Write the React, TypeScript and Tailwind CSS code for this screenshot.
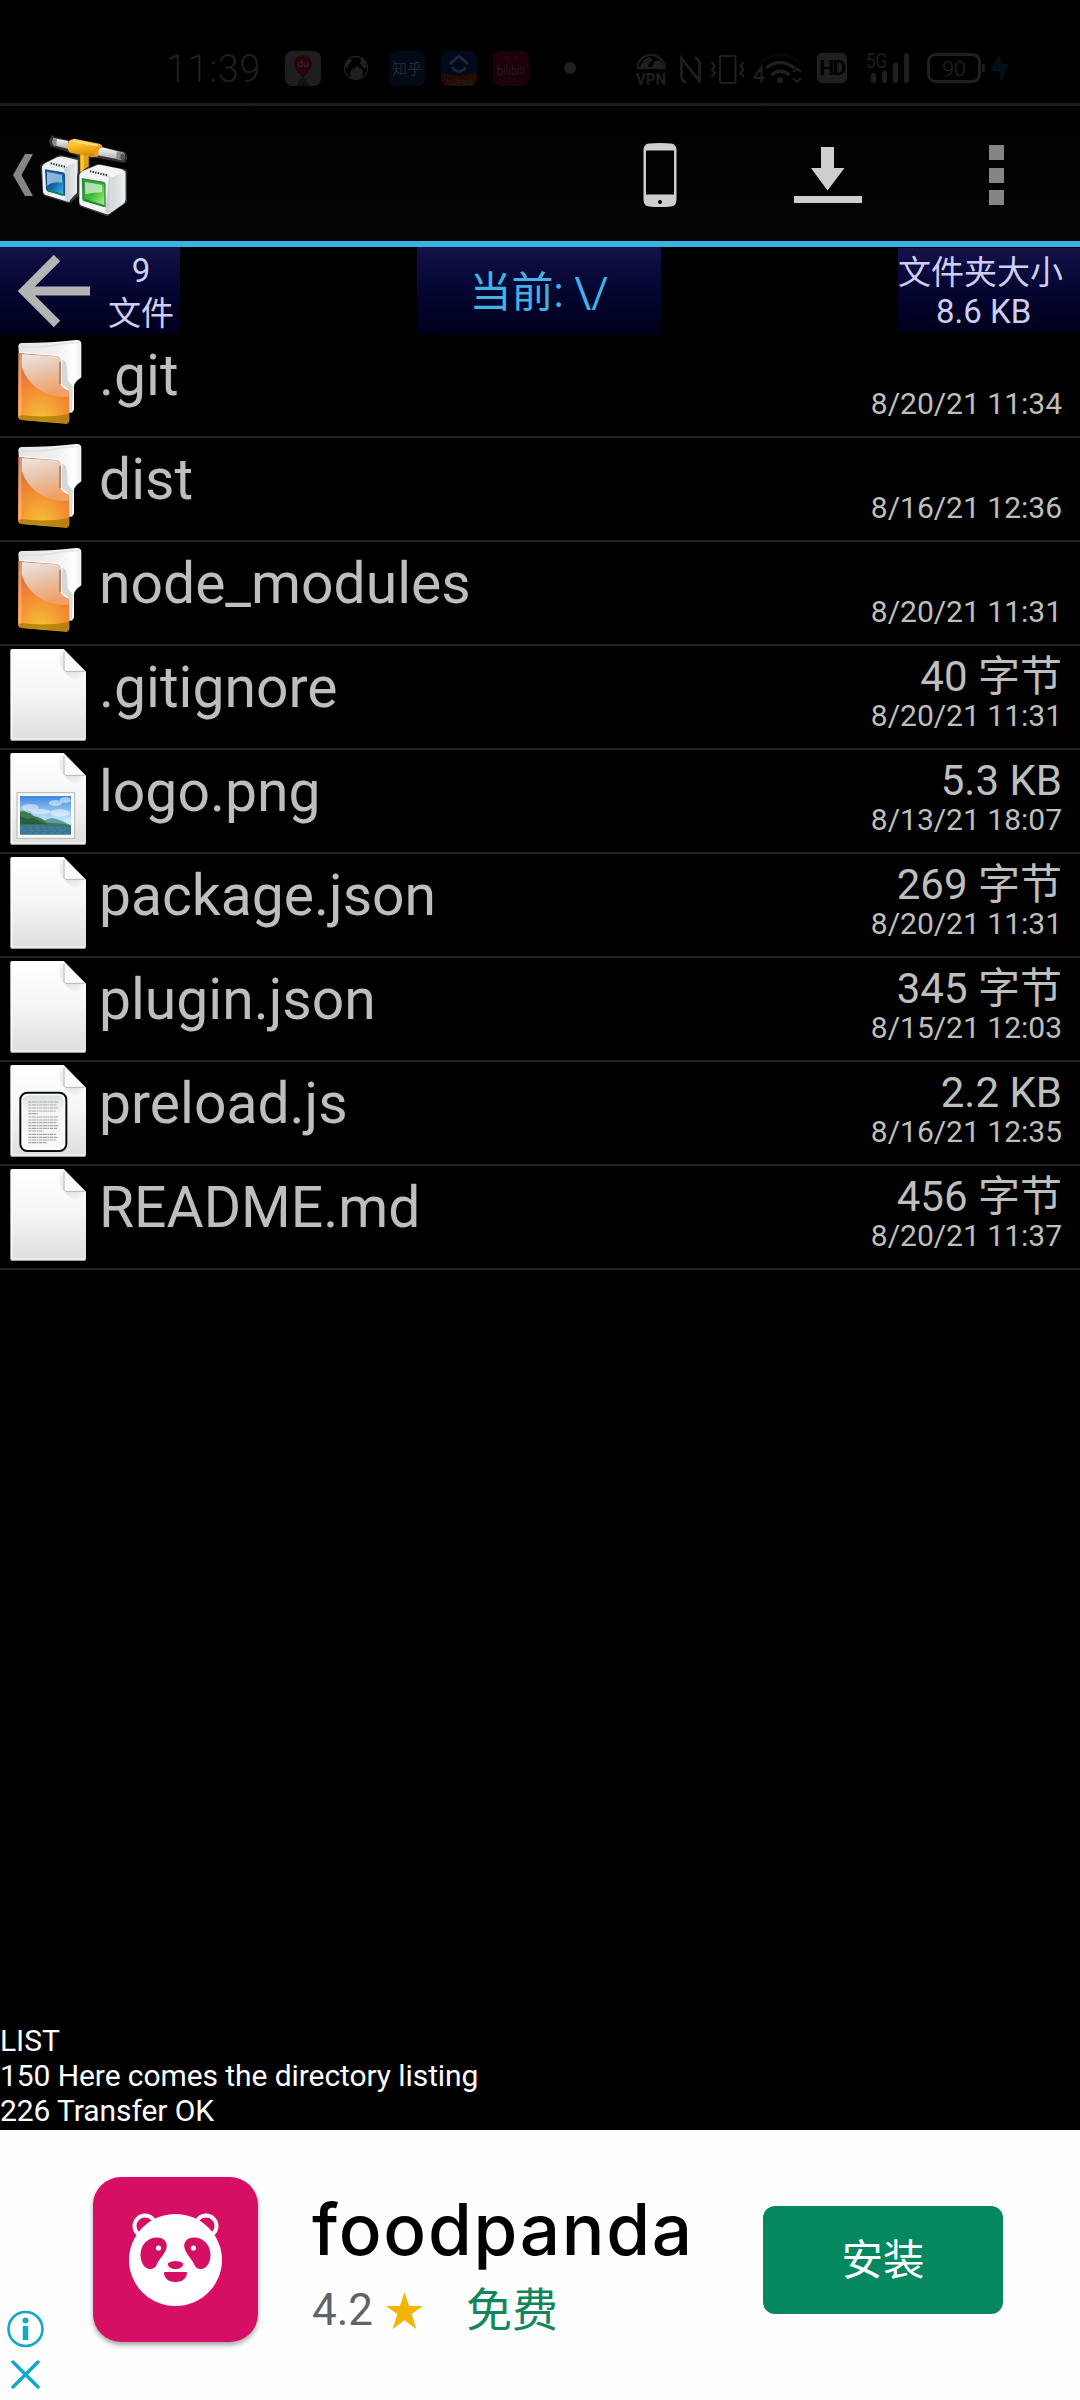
import React from "react";

type Kind = "folder" | "file" | "image" | "text";

const FILES: { name: string; kind: Kind; size?: string; date: string }[] = [
  { name: ".git", kind: "folder", date: "8/20/21 11:34" },
  { name: "dist", kind: "folder", date: "8/16/21 12:36" },
  { name: "node_modules", kind: "folder", date: "8/20/21 11:31" },
  { name: ".gitignore", kind: "file", size: "40 字节", date: "8/20/21 11:31" },
  { name: "logo.png", kind: "image", size: "5.3 KB", date: "8/13/21 18:07" },
  { name: "package.json", kind: "file", size: "269 字节", date: "8/20/21 11:31" },
  { name: "plugin.json", kind: "file", size: "345 字节", date: "8/15/21 12:03" },
  { name: "preload.js", kind: "text", size: "2.2 KB", date: "8/16/21 12:35" },
  { name: "README.md", kind: "file", size: "456 字节", date: "8/20/21 11:37" },
];

function StatusBar() {
  return (
    <div className="flex h-[103px] items-start pt-[51px] text-[#1f1f1f]">
      <div className="ml-[166px] h-[36px] w-[98px] whitespace-nowrap text-[38px] leading-[36px] font-light tracking-[0.5px]">11:39</div>
      {/* Map app */}
      <svg className="ml-[21px] h-[36px] w-[36px] overflow-visible" viewBox="0 0 36 36">
        <rect width="36" height="35" rx="7" fill="#1e1e1e" />
        <path d="M18 4a9 9 0 0 1 9 9c0 6-6 9-9 15-3-6-9-9-9-15a9 9 0 0 1 9-9z" fill="#260608" />
        <path d="M15 28h6l3 7H12z" fill="#0c1424" />
        <path d="M12 35l2-3h8l2 3z" fill="#200808" />
        <text x="18" y="16" textAnchor="middle" fontSize="9" fontFamily="Inter" fill="#303030">du</text>
      </svg>
      {/* Globe */}
      <svg className="ml-[22px] mt-[4px] h-[26px] w-[26px]" viewBox="0 0 26 26">
        <circle cx="13" cy="13" r="11.5" fill="none" stroke="#1f1f1f" strokeWidth="1.3" />
        <path d="M2 12q0-5 4-8l3 1-1 3-3 2v3zM18 3q5 2 6 8l-2 3-3-3-2-3zM8 24l-1-6 2-4 3-1 2-3 2 3 3 1 1 4-1 5q-6 3-11 1z" fill="#1f1f1f" />
      </svg>
      <svg className="ml-[20px] h-[36px] w-[36px] overflow-visible" viewBox="0 0 36 36">
        <rect width="36" height="35" rx="7" fill="#010a15" />
        <text x="18" y="23" textAnchor="middle" fontSize="15" fontFamily="Noto Sans CJK SC" fill="#23282d">知乎</text>
      </svg>
      <svg className="ml-[16px] h-[36px] w-[36px] overflow-visible" viewBox="0 0 36 36">
        <path d="M7 0h22a7 7 0 0 1 7 7v17H0V7a7 7 0 0 1 7-7z" fill="#03091c" />
        <path d="M0 21q18 7 36 0v7a7 7 0 0 1-7 7H7a7 7 0 0 1-7-7z" fill="#230b02" />
        <path d="M9 13l9-8 9 8M11 16q7 9 14 0" fill="none" stroke="#25282e" strokeWidth="2.6" />
        <text x="18" y="33" textAnchor="middle" fontSize="5.5" fontFamily="Noto Sans CJK SC" fill="#2b2321">为伍跨旅途</text>
      </svg>
      <svg className="ml-[16px] h-[36px] w-[36px] overflow-visible" viewBox="0 0 36 36">
        <rect width="36" height="35" rx="7" fill="#1d020b" />
        <path d="M12 5l3 3M24 5l-3 3" stroke="#290a14" strokeWidth="2" />
        <text x="18" y="24" textAnchor="middle" fontSize="13" fontFamily="Roboto" textLength="28" lengthAdjust="spacingAndGlyphs" fill="#2b151c">bilibili</text>
      </svg>
      <div className="ml-[35px] mt-[11px] h-[12px] w-[12px] rounded-full bg-[#1f1f1f]" />
      {/* VPN */}
      <svg className="ml-[59px] mt-[2px] h-[34px] w-[33px] overflow-visible" viewBox="0 0 33 34">
        <path d="M2.500 15a13.500 13 0 0 1 27 0z" fill="none" stroke="#1f1f1f" strokeWidth="2" />
        <path d="M5 13l4-6 5-3 4 3-4 3-1 4-5 2zM19 9l6-2 4 7h-7l-5 1z" fill="#1f1f1f" />
        <text x="16" y="31.500" textAnchor="middle" fontSize="17" fontWeight="700" fontFamily="Roboto" textLength="30" lengthAdjust="spacingAndGlyphs" fill="#1f1f1f">VPN</text>
      </svg>
      {/* NFC */}
      <svg className="ml-[12px] mt-[4px] h-[30px] w-[22px]" viewBox="0 0 22 30">
        <path d="M6 27.500q-4.500-2-4.500-6.500V3.500L19.500 26V9q0-4.500-4.500-6.500" fill="none" stroke="#1f1f1f" strokeWidth="2.800" />
      </svg>
      {/* Vibrate */}
      <svg className="ml-[8px] mt-[3px] h-[31px] w-[36px]" viewBox="0 0 36 31">
        <rect x="10" y="2" width="15.500" height="27" rx="1.500" fill="none" stroke="#1f1f1f" strokeWidth="2" />
        <path d="M1.500 8l3.500 4-3 3.500 3 3.500-3.500 4M34 8l-3.500 4 3 3.500-3 3.500 3.500 4" fill="none" stroke="#1f1f1f" strokeWidth="2" />
      </svg>
      {/* Wi-Fi */}
      <svg className="ml-[7px] mt-[1px] h-[34px] w-[50px]" viewBox="0 0 50 34">
        <path d="M9 9.500q18-14 37 0" fill="none" stroke="#080808" strokeWidth="3" />
        <path d="M13.500 16q13-11 28 0M18.500 23q9-7.500 18 0" fill="none" stroke="#1f1f1f" strokeWidth="3.400" />
        <circle cx="27" cy="28" r="3" fill="#1f1f1f" />
        <path d="M8.500 31V15L1 26h11M40 20l4-3.500 4 3.500M40 26l4 3.500 4-3.500" fill="none" stroke="#1f1f1f" strokeWidth="2.200" />
      </svg>
      <div className="ml-[14px] mt-[2px] flex h-[30px] w-[30px] items-center justify-center rounded-[5px] bg-[#1f1f1f] text-[21px] leading-[30px] font-bold tracking-[-1.5px] text-black">HD</div>
      {/* Cellular */}
      <svg className="ml-[19px] mt-[1px] h-[34px] w-[46px] overflow-visible" viewBox="0 0 46 34">
        <text x="0" y="16" fontSize="20" fontFamily="Roboto" textLength="21" lengthAdjust="spacingAndGlyphs" fill="#1f1f1f">5G</text>
        <path d="M7.500 23.500v5M18.500 21v7.500M29.500 13v15.500M40.500 3.500v25" stroke="#1f1f1f" strokeWidth="5" strokeLinecap="round" />
      </svg>
      {/* Battery */}
      <svg className="ml-[15px] mt-[1px] h-[34px] w-[84px] overflow-visible" viewBox="0 0 84 34">
        <rect x="1.500" y="2.500" width="51" height="27" rx="7" fill="none" stroke="#1f1f1f" strokeWidth="3" />
        <path d="M56.500 12v8" stroke="#1f1f1f" strokeWidth="2.500" />
        <text x="27" y="23.500" textAnchor="middle" fontSize="21" fontWeight="300" fontFamily="Roboto" fill="#262626">90</text>
        <path d="M73 1L63 19h9l2 12 8-19h-7z" fill="#011017" />
      </svg>
    </div>
  );
}

function AppLogo() {
  return (
    <svg className="ml-[5px] h-[84px] w-[92px]" viewBox="115 128 276 252">
      <defs>
        <linearGradient id="tube" x1="0" y1="0" x2="0.200" y2="1">
          <stop offset="0" stopColor="#ffcf4a" /><stop offset="0.400" stopColor="#fbc02c" /><stop offset="1" stopColor="#d98a00" />
        </linearGradient>
        <linearGradient id="pipe" x1="0" y1="0" x2="0" y2="1">
          <stop offset="0" stopColor="#fff" /><stop offset="1" stopColor="#a8a8a8" />
        </linearGradient>
        <linearGradient id="blueScreen" x1="0" y1="0" x2="1" y2="1">
          <stop offset="0" stopColor="#2f6fb4" /><stop offset="0.500" stopColor="#0f62ab" /><stop offset="1" stopColor="#39b8e4" />
        </linearGradient>
        <linearGradient id="greenScreen" x1="0" y1="0" x2="1" y2="1">
          <stop offset="0" stopColor="#3f9e4c" /><stop offset="0.500" stopColor="#3dbd35" /><stop offset="1" stopColor="#b0f088" />
        </linearGradient>
        <linearGradient id="side" x1="0" y1="0" x2="1" y2="0">
          <stop offset="0" stopColor="#c8cdd0" /><stop offset="1" stopColor="#eceff0" />
        </linearGradient>
      </defs>
      <g stroke="#343434" strokeWidth="12" strokeLinejoin="round" fill="#343434">
        <path d="M160 145l210 44q12 10 3 22l-75-13-34-3v45l-26 4v-52l-36-14-44-15q-8-10 2-21z" />
        <path d="M128 228l52-28 52 9v104l-24 20-72-22zM242 252l52-25 82 16v90l-54 38-78-28z" />
      </g>
      <path d="M162 144l44 8 2 24-46-11q-7-10 0-21z" fill="url(#pipe)" />
      <path d="M162 144l10 2-2 21-8-2q-7-10 0-21z" fill="#8c8c8c" />
      <path d="M296 168l76 19q7 12-2 23l-76-15z" fill="url(#pipe)" />
      <path d="M352 183l20 4q7 12-2 23l-21-4z" fill="#8d8d8d" /><ellipse cx="369" cy="200" rx="7" ry="10" fill="#555" />
      <path d="M241 185h26v43l-26 18z" fill="#e3a316" /><path d="M244 190h8v48l-8 6z" fill="#ffc83f" />
      <path d="M219 147q6-3 12 0l68 13q11 3 8 12l-11 2-4 25-15 2-56-12q-20-1-16-25 2-16 14-17z" fill="url(#tube)" />
      <path d="M298 163q12 1 9 9-12 0-11 17l-1 10q-14-2-12-18 2-14 15-18z" fill="#f59a10" />
      <path d="M221 152l74 14" stroke="#ffe390" strokeWidth="5" />
      <path d="M127 229q3-8 12-12l35-17q8-3 18-1l42 10v37q-3 7-3 60l-22 26q-4 2-9 1l-61-19q-9-3-9-12z" fill="#eff2f3" />
      <path d="M194 232l38-18v94l-29 26q-9-2-6-14z" fill="url(#side)" /><path d="M192 236q15-4 16 10v88" fill="none" stroke="#d2d7d9" strokeWidth="5" />
      <path d="M136 237l54 9q6 2 6 8v63l-50-13q-6-2-7-8z" fill="#174c8a" />
      <path d="M141 242l50 9v61l-42-12q-6-1-6-8z" fill="url(#blueScreen)" />
      <path d="M142 245l45 8v24q-25-4-45 9z" fill="#fff" fillOpacity="0.500" /><path d="M144 298l46 17" stroke="#178745" strokeWidth="5" />
      <path d="M239 254q2-8 10-12l38-16q8-4 18-2l59 12q13 3 13 15v78q0 8-7 12l-41 29q-4 3-10 1l-71-24q-9-3-9-12z" fill="#f2f4f5" />
      <path d="M327 265l50-23v87q0 7-7 12l-49 30q-5-2-4-10z" fill="url(#side)" /><path d="M313 255q21 1 21 20v89" fill="none" stroke="#d9dddf" strokeWidth="6" />
      <path d="M246 263l66 11q6 2 6 8v69l-65-18q-5-2-5-7z" fill="#308d38" />
      <path d="M253 270l57 10q4 1 4 6v58l-59-16z" fill="url(#greenScreen)" />
      <path d="M256 275l51 9v22q-27 0-50 6z" fill="#fff" fillOpacity="0.600" /><path d="M255 328l58 20" stroke="#128b20" strokeWidth="5" />
      <path d="M153 219l47 11M271 243l53 12" stroke="#222" strokeWidth="6" strokeDasharray="4 4" />
    </svg>
  );
}

function ActionBar() {
  return (
    <div className="flex h-[144px] items-center border-t-[3px] border-b-[6px] border-t-[#1c1c1c] border-b-[#3cb1e3] bg-linear-to-b from-[#010101] to-[#040505]">
      <svg className="ml-[13px] mt-[2px] h-[42px] w-[20px]" viewBox="0 0 20 42">
        <path d="M12 0h8L8.500 21 20 42h-8L0 21z" fill="#858585" />
      </svg>
      <div className="flex h-full w-[105px] items-center pt-[2px]"><AppLogo /></div>
      <svg className="ml-[505px] mt-[3px] h-[64px] w-[34px]" viewBox="0 0 34 64">
        <path fillRule="evenodd" d="M6 .5Q17-.5 28 .5q5 .5 5.500 6V57q-.5 6-5.500 6.500-11 1-22 0Q1 63 .5 57V6.500Q1 1 6 .5zM3 7.500v44h28v-44zM17 57a2 2 0 1 0 0 4 2 2 0 0 0 0-4z" fill="#cecece" />
      </svg>
      <svg className="ml-[117px] mt-[3px] h-[56px] w-[68px]" viewBox="0 0 68 56">
        <path d="M27 0h13v21h10.500L33.500 43.500 17 21h10zM0 49h68v7H0z" fill="#cecece" />
      </svg>
      <div className="ml-[127px] mt-[3px] flex h-[60px] w-[15px] flex-col justify-between">
        <div className="h-[15px] bg-[#858585]" />
        <div className="h-[15px] bg-[#858585]" />
        <div className="h-[15px] bg-[#858585]" />
      </div>
    </div>
  );
}

function PathBar() {
  return (
    <div className="flex h-[87px] items-start text-[33px] text-[#cfcdf2]">
      <div className="flex h-[87px] w-[180px] bg-linear-to-b from-[#121248] to-[#00001c]">
        <svg className="ml-[18px] mt-[8px] h-[72px] w-[72px]" viewBox="0 0 72 72">
          <path d="M72 36H12M39 3L6 36l33 33" fill="none" stroke="#b4b4b4" strokeWidth="9" />
        </svg>
        <div className="ml-[18px] flex w-[66px] flex-col items-center pt-[2px] leading-[43px]">
          <span>9</span>
          <span>文件</span>
        </div>
      </div>
      <div className="ml-[237px] h-[87px] w-[244px] bg-linear-to-b from-[#121248] to-[#00001c] text-center text-[42px] leading-[92px] text-[#43b2e2]">
        当前: \/
      </div>
      <div className="mt-[1px] ml-auto flex h-[84px] w-[182px] flex-col bg-linear-to-b from-[#121248] to-[#00001c] leading-[42px]">
        <span className="h-[43px] leading-[50px]">文件夹大小</span>
        <span className="ml-[38px] whitespace-nowrap">8.6 KB</span>
      </div>
    </div>
  );
}

function FolderIcon() {
  return (
    <svg className="ml-[16px] mt-[4px] h-[88px] w-[68px]" viewBox="51 24 204 264">
      <path d="M58 48q1-8 10-9 90 0 164-9 15-1 15 12v100q-22 16-22 26v70q-3 12-14 10L60 80z" fill="url(#paper)" />
      <path d="M64 50q70 4 135-10l42-3" fill="none" stroke="#d5d5d5" strokeWidth="5" opacity=".6" />
      <path d="M190 90q16-4 16 60l16 20-3 70-12 5-20-80z" fill="#bbb" opacity=".55" />
      <path d="M58 68l112 8q17 2 17 16v70q2 6 22 18l2 90q-1 12-11 11L68 270q-11-2-11-12z" fill="url(#orange)" />
      <path d="M68 72l103 7q14 1 14 14v70q2 6 22 18v20Q100 200 68 110z" fill="url(#gloss)" />
      <path d="M60 254q85 12 151-3v18q-1 12-11 11L68 270q-8-2-8-16z" fill="#a77a00" opacity=".75" />
      <path d="M60 67l111 9q16 1 16 16v70q3 8 22 18" fill="none" stroke="#fff" strokeWidth="4" />
      <path d="M63 72v186" stroke="#fff" strokeWidth="9" opacity=".28" />
      <path d="M183 95v67" stroke="#8f4b35" strokeWidth="5" opacity=".6" />
    </svg>
  );
}

function DocumentIcon({ kind }: { kind: Kind }) {
  return (
    <svg className="ml-[9px] mt-[2px] h-[94px] w-[79px]" viewBox="27 24 237 282">
      <path d="M36 27h155l67 68v201q0 6-6 6H37q-6 0-6-6V32q0-5 5-5z" fill="url(#doc)" />
      <path d="M190 30v65h68v30q-60 0-80-55-6-25 12-40z" fill="url(#fold)" />
      <path d="M192 31l64 64h-58q-6 0-6-6z" fill="#fbfbfb" />
      <path d="M192 35v54q0 5 6 5h56" fill="none" stroke="#b5b5b5" strokeWidth="3" />
      <path d="M192 29l66 67" stroke="#c4c4c4" strokeWidth="2" />
      <path d="M35 32v265h219" fill="none" stroke="#fff" strokeWidth="3" />
      <path d="M33 301h224" stroke="#999" strokeWidth="2" />
      {kind === "image" && (
        <g>
          <rect x="51" y="146" width="173" height="137" fill="#f8f9fa" stroke="#b6b6b6" strokeWidth="3" />
          <rect x="60" y="156" width="153" height="116" fill="url(#sky)" />
          <g fill="#fff" opacity=".5">
            <ellipse cx="90" cy="191" rx="26" ry="11" /><ellipse cx="122" cy="203" rx="30" ry="8" /><ellipse cx="166" cy="177" rx="20" ry="9" /><ellipse cx="196" cy="168" rx="17" ry="9" /><ellipse cx="180" cy="207" rx="30" ry="11" />
          </g>
          <path d="M118 240q30-24 48-16 26 6 47 22H118z" fill="#5e9bab" />
          <path d="M60 203q10-5 20 2 12 1 21 11 24 4 40 20 30 0 72 7v6H60z" fill="#3d7b4c" />
          <path d="M60 215l22 10 20-4 18 12 24 8H60z" fill="#2a5f3c" />
          <path d="M60 243l153 4v25H60z" fill="#3b7593" />
          <path d="M60 252h153M66 260h130M60 267h153" stroke="#5a92b0" strokeWidth="1.500" strokeDasharray="14 8" />
        </g>
      )}
      {kind === "text" && (
        <g>
          <rect x="61" y="110" width="138" height="175" rx="21" fill="#fff" stroke="#0b0d0f" strokeWidth="6" />
          <rect x="69" y="118" width="122" height="159" rx="14" fill="url(#page)" />
          <g stroke="#a3a6a8" strokeWidth="3.500" strokeDasharray="9 1.500 13 1.500 6 1.500">
            <path d="M85 138h90M85 147h84M85 156h91M85 165h82M85 173h28M85 183h90M85 192h87M85 200h84M85 209h91M85 217h86M85 225h46M85 235h82M85 244h86M85 252h84M85 260h54" />
          </g>
        </g>
      )}
    </svg>
  );
}

function IconDefs() {
  return (
    <svg className="absolute h-0 w-0" aria-hidden="true">
      <defs>
        <linearGradient id="paper" x1="0" y1="0" x2="1" y2="0">
          <stop offset="0" stopColor="#e4e4e4" /><stop offset="0.600" stopColor="#f1f1f1" /><stop offset="0.900" stopColor="#fff" /><stop offset="1" stopColor="#eee" />
        </linearGradient>
        <radialGradient id="orange" cx="0.450" cy="1" r="1">
          <stop offset="0" stopColor="#f2c83a" /><stop offset="0.300" stopColor="#f5a535" /><stop offset="0.600" stopColor="#f18433" /><stop offset="1" stopColor="#c56a35" />
        </radialGradient>
        <linearGradient id="gloss" x1="0" y1="0" x2="0.300" y2="1">
          <stop offset="0" stopColor="#eee6e2" /><stop offset="0.500" stopColor="#e8c4ad" /><stop offset="1" stopColor="#f3a066" />
        </linearGradient>
        <linearGradient id="doc" x1="0" y1="0" x2="0" y2="1">
          <stop offset="0" stopColor="#fff" /><stop offset="0.450" stopColor="#f7f7f7" /><stop offset="1" stopColor="#dedede" />
        </linearGradient>
        <radialGradient id="fold" cx="0.500" cy="0.400" r="0.600">
          <stop offset="0" stopColor="#ccc" /><stop offset="1" stopColor="#ccc" stopOpacity="0" />
        </radialGradient>
        <linearGradient id="sky" x1="0" y1="0" x2="0" y2="1">
          <stop offset="0" stopColor="#3e86e0" /><stop offset="0.650" stopColor="#c9eaf9" />
        </linearGradient>
        <linearGradient id="page" x1="0" y1="0" x2="0" y2="1">
          <stop offset="0" stopColor="#dbe0e4" /><stop offset="0.250" stopColor="#f2f4f5" /><stop offset="1" stopColor="#f8f9fa" />
        </linearGradient>
      </defs>
    </svg>
  );
}

function FileList() {
  return (
    <ul>
      {FILES.map((f) => (
        <li key={f.name} className="flex h-[104px] border-b-2 border-[#242424] text-[#bebebe]">
          <div className="w-[99px]">{f.kind === "folder" ? <FolderIcon /> : <DocumentIcon kind={f.kind} />}</div>
          <div className="mt-[8px] flex-1 text-[57px] leading-[67px]">{f.name}</div>
          <div className="flex flex-col items-end pr-[18px] pt-[6px]">
            <div className="h-[46px] text-[42px] leading-[49px]">{f.size}</div>
            <div className="text-[30px] leading-[35px]">{f.date}</div>
          </div>
        </li>
      ))}
    </ul>
  );
}

function AdBanner() {
  return (
    <div className="flex h-[270px] items-start bg-[#fefefe]">
      <div className="flex w-[93px] flex-col gap-[12px] pt-[180px] pl-[7px]">
        <svg className="h-[38px] w-[38px]" viewBox="0 0 38 38">
          <circle cx="18.500" cy="19" r="17" fill="none" stroke="#12a9c9" strokeWidth="2.600" />
          <circle cx="18.500" cy="10.500" r="3" fill="#12a9c9" />
          <path d="M18.500 16v14" stroke="#12a9c9" strokeWidth="5.500" />
        </svg>
        <svg className="ml-[4px] h-[29px] w-[29px]" viewBox="0 0 29 29">
          <path d="M2 2l25 25M27 2L2 27" stroke="#12a9c9" strokeWidth="3.500" strokeLinecap="round" />
        </svg>
      </div>
      <div className="mt-[47px] h-[165px] w-[165px] rounded-[28px] bg-[#d70f64] shadow-[0_3px_5px_rgba(0,0,0,0.35)]">
        <svg className="h-[165px] w-[165px]" viewBox="0 0 165 165">
          <g fill="#d70f64" stroke="#fff" strokeWidth="4">
            <circle cx="52" cy="49" r="10.500" /><circle cx="113" cy="49" r="10.500" />
          </g>
          <ellipse cx="82.500" cy="83" rx="46.500" ry="46" fill="#fff" />
          <g fill="#d70f64">
            <path d="M64 60.500c7 0 11 5 9.500 10.500-1.500 6-6 9-9.500 16-1.500 4-4 5-7 5-5 0-9.500-6-9.500-14 0-10 7-17.500 16.500-17.500z" />
            <path d="M101 60.500c-7 0-11 5-9.500 10.500 1.500 6 6 9 9.500 16 1.500 4 4 5 7 5 5 0 9.500-6 9.500-14 0-10-7-17.500-16.500-17.500z" />
            <path d="M75 86q7.500-4 15 0c1 4-4 6-7.500 6S74 90 75 86zM71 95h23c0 6-4 10-11.500 10S71 101 71 95z" />
          </g>
          <circle cx="65.500" cy="71" r="2.600" fill="#fff" /><circle cx="100.500" cy="71" r="2.600" fill="#fff" />
        </svg>
      </div>
      <div className="ml-[54px] w-[451px] pt-[58px]">
        <div className="h-[82px] font-['Inter'] text-[71px] leading-[82px] font-medium tracking-[1.700px] text-black">foodpanda</div>
        <div className="mt-[13px] flex h-[54px] items-center">
          <span className="w-[60px] text-[44px] leading-[54px] text-[#5f6368]">4.2</span>
          <svg className="ml-[13px] h-[37px] w-[39px]" viewBox="0 0 38 36">
            <path d="M19 0l4.500 13.500H37L26 21.500 30.500 36 19 27.500 7.500 36 12 21.500 1 13.500h13.500z" fill="#f4b400" />
          </svg>
          <span className="ml-[42px] text-[46px] leading-[54px] text-[#12875f]">免费</span>
        </div>
      </div>
      <button className="mt-[76px] h-[108px] w-[240px] rounded-[12px] bg-[#05875f] text-[41.500px] leading-[109px] text-white">安装</button>
    </div>
  );
}

export default function App() {
  return (
    <div className="flex h-[2400px] w-[1080px] flex-col overflow-hidden bg-black font-['Roboto','Noto_Sans_CJK_SC',sans-serif]">
      <IconDefs />
      <StatusBar />
      <ActionBar />
      <PathBar />
      <FileList />
      <div className="mt-auto pb-[2px] text-[30px] leading-[35px] tracking-[-0.080px] text-white">
        <p>LIST</p>
        <p>150 Here comes the directory listing</p>
        <p>226 Transfer OK</p>
      </div>
      <AdBanner />
    </div>
  );
}
